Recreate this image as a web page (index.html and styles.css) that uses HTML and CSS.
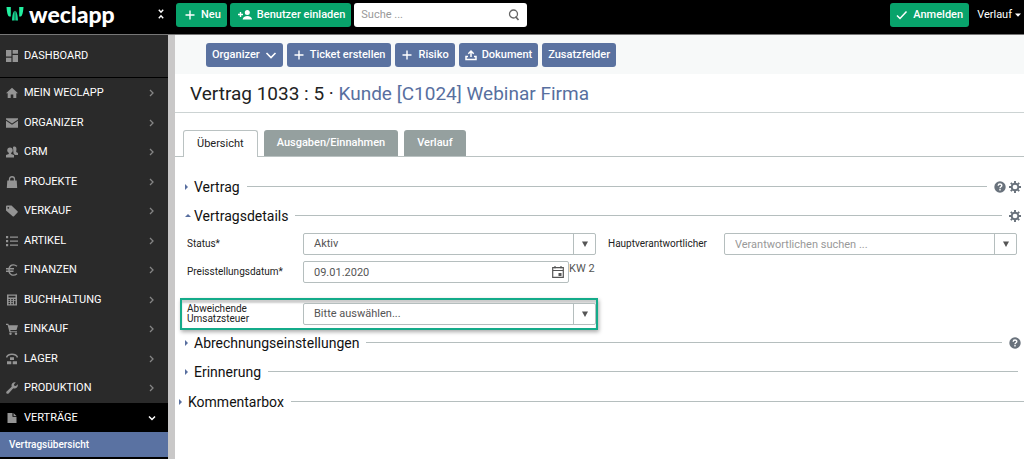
FILE: index.html
```html
<!DOCTYPE html>
<html lang="de">
<head>
<meta charset="utf-8">
<meta name="viewport" content="width=device-width, initial-scale=1">
<title>weclapp – Vertrag 1033</title>
<link rel="stylesheet" href="styles.css">
</head>
<body>
<svg class="sprite" aria-hidden="true">
  <symbol id="chevron" viewBox="0 0 8 10"><path d="M2 2l3 3L2 8" fill="none" stroke="currentColor" stroke-width="1.300"/></symbol>
  <symbol id="plus" viewBox="0 0 12 12"><path d="M6 1.500v9M1.500 6h9" fill="none" stroke="currentColor" stroke-width="1.400"/></symbol>
  <symbol id="gear" viewBox="0 0 12 12"><circle cx="6" cy="6" r="3.300" fill="none" stroke="currentColor" stroke-width="1.900"/><path d="M6 0v2.200M6 9.800V12M0 6h2.200M9.800 6H12M1.800 1.800l1.500 1.500M8.700 8.700l1.500 1.500M1.800 10.200l1.500-1.500M8.700 3.300l1.500-1.500" stroke="currentColor" stroke-width="1.900"/></symbol>
  <symbol id="help" viewBox="0 0 12 12"><circle cx="6" cy="6" r="5.700" fill="currentColor"/><path d="M4.200 4.700C4.200 2.500 7.800 2.500 7.800 4.600C7.800 5.800 6 5.700 6 7.200M6 8.100v1.400" fill="none" stroke="#fff" stroke-width="1.400"/></symbol>
  <symbol id="down" viewBox="0 0 6 6"><path d="M0 .5h6L3 6z" fill="currentColor"/></symbol>
</svg>

<header class="topbar">
  <div class="brand">
    <a class="logo" href="#">
      <svg class="logo-mark" viewBox="0 0 18 16" aria-hidden="true"><path d="M.5 1h4.300v9.500H3.300C1.800 10.500.8 6 .5 1zM17.500 1h-4.300v9.500h1.500c1.500 0 2.500-4.500 2.800-9.500z" fill="#22f0a0"/><path d="M8.700 4.800V14.500H6c.1-5 1.200-9 2.700-9.700zM9.300 4.800V14.500H12c-.1-5-1.200-9-2.700-9.700z" fill="#18d893"/></svg>
      <span>weclapp</span>
    </a>
    <button class="collapse" type="button" aria-label="Menü einklappen"><svg viewBox="0 0 6 10"><path d="M.8.800L3 3.200 5.200.8M.8 9.200L3 6.800l2.200 2.400" fill="none" stroke="currentColor" stroke-width="1.400"/></svg></button>
  </div>
  <div class="top-actions">
    <button class="btn green" type="button"><svg class="i12"><use href="#plus"/></svg>Neu</button>
    <button class="btn green" type="button"><svg class="i14" viewBox="0 0 14 12"><path d="M2.500 3v5M0 5.500h5" stroke="currentColor" stroke-width="1.400"/><circle cx="9.300" cy="3.500" r="2.500" fill="currentColor"/><path d="M4.700 10.500c0-4.800 9.300-4.800 9.300 0z" fill="currentColor"/></svg>Benutzer einladen</button>
    <div class="search">
      <input type="search" placeholder="Suche ..." aria-label="Suche">
      <svg class="i12" viewBox="0 0 12 12"><circle cx="5.500" cy="5" r="4" fill="none" stroke="currentColor" stroke-width="1.300"/><path d="M7.500 7.500l3 3.500" stroke="currentColor" stroke-width="1.700"/></svg>
    </div>
  </div>
  <div class="session">
    <button class="btn green" type="button"><svg class="i12" viewBox="0 0 12 12"><path d="M1 6.500l3 3 6.500-7" fill="none" stroke="currentColor" stroke-width="1.500"/></svg>Anmelden</button>
    <button class="history" type="button">Verlauf<svg viewBox="0 0 6 4"><path d="M0 .5h6L3 3.700z" fill="currentColor"/></svg></button>
  </div>
</header>

<div class="shell">
  <nav class="sidebar" aria-label="Hauptmenü">
    <a class="dash" href="#"><svg class="i12" viewBox="0 0 12 12"><path d="M0 0h5.400v6.500H0zM6.600 0H12v3.800H6.600zM0 7.700h5.400V12H0zM6.600 5h5.400v7H6.600z" fill="currentColor"/></svg><span>DASHBOARD</span></a>
    <ul class="menu">
      <li><a href="#"><svg class="i12" viewBox="0 0 12 12"><path d="M6 .8l6 5.400h-1.700V11H7.300V7.500H4.700V11h-3V6.200H0z" fill="currentColor"/></svg><span>MEIN WECLAPP</span><svg class="arrow"><use href="#chevron"/></svg></a></li>
      <li><a href="#"><svg class="i12" viewBox="0 0 12 12"><path d="M0 1.200h12v1.300L6 6.400 0 2.500z" fill="currentColor"/><path d="M0 3.800l6 4 6-4v7H0z" fill="currentColor"/></svg><span>ORGANIZER</span><svg class="arrow"><use href="#chevron"/></svg></a></li>
      <li><a href="#"><svg class="i12" viewBox="0 0 12 12"><circle cx="4" cy="4.200" r="2.700" fill="currentColor"/><path d="M2.800 6h2.400v2L8 9v2.500H0V9l2.800-1zM7 1c3-1.500 4 1 3.200 4v1L12 7v2H9L7.500 7.500z" fill="currentColor"/></svg><span>CRM</span><svg class="arrow"><use href="#chevron"/></svg></a></li>
      <li><a href="#"><svg class="i12" viewBox="0 0 12 12"><path d="M1.300 4.500h9.400L11.200 12H.8z" fill="currentColor"/><path d="M3.500 5V3c0-3 5-3 5 0v2" fill="none" stroke="currentColor" stroke-width="1.300"/></svg><span>PROJEKTE</span><svg class="arrow"><use href="#chevron"/></svg></a></li>
      <li><a href="#"><svg class="i12" viewBox="0 0 12 12"><path d="M0 1.500Q0 .5 1 .5h4.500l6 5.800q.6.700 0 1.300L8 11.300q-.7.600-1.400 0L0 5.500zM2.300 1.900a.9.900 0 100 1.800.9.900 0 000-1.800z" fill="currentColor" fill-rule="evenodd"/></svg><span>VERKAUF</span><svg class="arrow"><use href="#chevron"/></svg></a></li>
      <li><a href="#"><svg class="i12" viewBox="0 0 12 12"><path d="M0 1h2.200v2.200H0zM0 5h2.200v2.200H0zM0 9h2.200v2.200H0zM4 1.500h8v1.200H4zM4 5.500h8v1.200H4zM4 9.500h8v1.200H4z" fill="currentColor"/></svg><span>ARTIKEL</span><svg class="arrow"><use href="#chevron"/></svg></a></li>
      <li><a href="#"><svg class="i12" viewBox="0 0 12 12"><path d="M11 2.200C7.500-.5 3 1 3 6s4.500 6.500 8 3.800M0 4.800h8M0 7.200h7.500" fill="none" stroke="currentColor" stroke-width="1.400"/></svg><span>FINANZEN</span><svg class="arrow"><use href="#chevron"/></svg></a></li>
      <li><a href="#"><svg class="i12" viewBox="0 0 12 12"><path d="M1 .5h10v11H1zM2.500 1.800v1.700h7V1.800zM2.500 5v1.200H4V5zM5.300 5v1.200h1.500V5zM8 5v1.200h1.500V5zM2.500 7v1.200H4V7zM5.300 7v1.200h1.500V7zM2.500 9v1.200H4V9zM5.300 9v1.200h1.500V9zM8 7v3.200h1.500V7z" fill="currentColor" fill-rule="evenodd"/></svg><span>BUCHHALTUNG</span><svg class="arrow"><use href="#chevron"/></svg></a></li>
      <li><a href="#"><svg class="i12" viewBox="0 0 12 12"><path d="M0 .8h2.300l.5 1.400H12L10.500 7H4.300l.3 1.200H11v1H3.500L1.600 2H0z" fill="currentColor"/><circle cx="4.500" cy="10.700" r="1.200" fill="currentColor"/><circle cx="10" cy="10.700" r="1.200" fill="currentColor"/></svg><span>EINKAUF</span><svg class="arrow"><use href="#chevron"/></svg></a></li>
      <li><a href="#"><svg class="i12" viewBox="0 0 12 12"><path d="M.5 4.500C2 .2 10 .2 11.500 4.500" fill="none" stroke="currentColor" stroke-width="1.500"/><path d="M4 4.200h4V7H4zM1 8.300h4.300v3H1zM6.700 8.300H11v3H6.700z" fill="currentColor"/></svg><span>LAGER</span><svg class="arrow"><use href="#chevron"/></svg></a></li>
      <li><a href="#"><svg class="i12" viewBox="0 0 12 12"><path d="M9.700.4L8 2.200l.3 1.600 1.600.3L11.700 2.300C12.500 5 10 7.200 7.300 6.300L2.600 11.400C1.200 12.600-.6 10.800.6 9.400L5.700 4.700C4.800 2 7 -.4 9.700.4z" fill="currentColor"/></svg><span>PRODUKTION</span><svg class="arrow"><use href="#chevron"/></svg></a></li>
    </ul>
    <a class="current" href="#" aria-expanded="true"><svg class="i12" viewBox="0 0 12 12"><path d="M1.500 1h5v3.800h4V11h-9zM7.500 1l3 2.900h-3z" fill="currentColor"/></svg><span>VERTRÄGE</span><svg class="open" viewBox="0 0 8 6"><path d="M1 1.500l3 3 3-3" fill="none" stroke="currentColor" stroke-width="1.500"/></svg></a>
    <a class="sub" href="#" aria-current="page">Vertragsübersicht</a>
  </nav>

  <main class="content">
    <div class="toolbar">
      <button class="btn blue" type="button">Organizer<svg class="i12" viewBox="0 0 12 12"><path d="M1.500 4L6 8.500 10.500 4" fill="none" stroke="currentColor" stroke-width="1.600"/></svg></button>
      <button class="btn blue" type="button"><svg class="i12"><use href="#plus"/></svg>Ticket erstellen</button>
      <button class="btn blue" type="button"><svg class="i12"><use href="#plus"/></svg>Risiko</button>
      <button class="btn blue" type="button"><svg class="i12" viewBox="0 0 12 12"><path d="M6 8V2.500M3.300 4.800L6 2l2.700 2.800M3 7.500H1v3h10v-3H9" fill="none" stroke="currentColor" stroke-width="1.500"/></svg>Dokument</button>
      <button class="btn blue" type="button">Zusatzfelder</button>
    </div>
    <h1 class="title">Vertrag 1033 : 5 · <a href="#">Kunde [C1024] Webinar Firma</a></h1>

    <div class="tabs" role="tablist">
      <button class="tab active" type="button" role="tab" aria-selected="true">Übersicht</button>
      <button class="tab" type="button" role="tab" aria-selected="false">Ausgaben/Einnahmen</button>
      <button class="tab" type="button" role="tab" aria-selected="false">Verlauf</button>
    </div>

    <div class="panel">
      <section class="head"><h2><button type="button" aria-expanded="false">Vertrag</button></h2><span class="rule"></span><button class="tool" type="button" aria-label="Hilfe"><svg class="i12"><use href="#help"/></svg></button><button class="tool" type="button" aria-label="Einstellungen"><svg class="i12"><use href="#gear"/></svg></button></section>
      <section class="head"><h2><button type="button" aria-expanded="true">Vertragsdetails</button></h2><span class="rule"></span><button class="tool" type="button" aria-label="Einstellungen"><svg class="i12"><use href="#gear"/></svg></button></section>

      <form class="form">
        <div class="row">
          <label for="status">Status*</label>
          <div class="combo"><select id="status"><option>Aktiv</option></select><span class="drop"><svg><use href="#down"/></svg></span></div>
        </div>
        <div class="row">
          <label for="owner">Hauptverantwortlicher</label>
          <div class="combo"><input id="owner" type="text" placeholder="Verantwortlichen suchen ..."><button class="drop" type="button" aria-label="Liste öffnen"><svg><use href="#down"/></svg></button></div>
        </div>
        <div class="row first">
          <label for="date">Preisstellungsdatum*</label>
          <div class="date">
            <div class="combo"><input id="date" type="text" value="09.01.2020"><button class="cal" type="button" aria-label="Kalender"><svg class="i12" viewBox="0 0 12 12"><path d="M.7 1.700h10.600v9.600H.7zM.7 4.500h10.600M3 0v2.500M9 0v2.500" fill="none" stroke="currentColor" stroke-width="1.200"/><path d="M6.500 7h3v3h-3z" fill="currentColor"/></svg></button></div>
            <span class="week">KW 2</span>
          </div>
        </div>
        <div class="row first marked">
          <label for="tax">Abweichende Umsatzsteuer</label>
          <div class="combo"><select id="tax"><option>Bitte auswählen...</option></select><span class="drop"><svg><use href="#down"/></svg></span></div>
        </div>
      </form>

      <section class="head"><h2><button type="button" aria-expanded="false">Abrechnungseinstellungen</button></h2><span class="rule"></span><button class="tool" type="button" aria-label="Hilfe"><svg class="i12"><use href="#help"/></svg></button></section>
      <section class="head"><h2><button type="button" aria-expanded="false">Erinnerung</button></h2><span class="rule"></span></section>
    </div>
    <section class="head comments"><h2><button type="button" aria-expanded="false">Kommentarbox</button></h2><span class="rule"></span></section>
  </main>
</div>
</body>
</html>
```
FILE: styles.css
```css
*, *::before { box-sizing: border-box; }
body {
  margin: 0;
  min-height: 100vh;
  display: flex;
  flex-direction: column;
  background: #fff;
  color: #222;
  font: 11px/16px Roboto, "Liberation Sans", sans-serif;
}
button, input, select { font: inherit; color: inherit; margin: 0; }
button { border: 0; padding: 0; background: none; cursor: pointer; }
a { color: inherit; text-decoration: none; }
svg { display: block; flex: none; }
.sprite { position: absolute; width: 0; height: 0; }
.i12 { width: 12px; height: 12px; }
.i14 { width: 14px; height: 12px; }

/* top bar */
.topbar { display: flex; align-items: flex-start; height: 35px; background: #000; color: #fff; border-bottom: 1px solid #777; }
.brand { width: 176px; display: flex; align-items: center; justify-content: space-between; padding: 0 12px 0 6px; height: 28px; }
.logo { display: flex; align-items: center; gap: 5px; font-family: Lato, sans-serif; font-size: 23px; line-height: 28px; font-weight: 900; }
.logo-mark { width: 18px; height: 16px; }
.collapse svg { width: 6px; height: 10px; }
.top-actions { display: flex; gap: 3px; padding-top: 3px; }
.btn { display: flex; align-items: center; justify-content: center; gap: 5px; height: 24px; padding: 0 6px; border-radius: 3px; color: #fff; font-weight: 500; white-space: nowrap; }
.green { background: #08a36b; }
.top-actions .btn { padding: 0 6px 0 8px; }
.search { display: flex; align-items: center; width: 173px; height: 24px; padding: 0 7px; border-radius: 3px; background: #fff; color: #666; }
.search input { flex: 1; min-width: 0; border: 0; padding: 0; outline: 0; background: none; }
.search input::placeholder { color: #999; }
.session { margin-left: auto; display: flex; gap: 8px; padding: 3px 3px 0 0; }
.history { display: flex; align-items: center; gap: 3px; height: 24px; color: #fff; }
.history svg { width: 6px; height: 4px; }

/* sidebar */
.shell { flex: 1; display: flex; }
.sidebar { flex: none; width: 175px; border-right: 7px solid #c9c8c8; background: #000; color: #fff; }
.dash, .menu a, .current { display: flex; align-items: center; gap: 6px; padding: 0 12px 0 6px; }
.dash { height: 42px; background: #2a2a2a; }
.dash svg, .menu svg, .current .i12 { color: #949494; }
.menu { list-style: none; margin: 1px 0 0; padding: 0; background: #2a2a2a; }
.menu a { height: 29px; }
.menu li:nth-child(odd) { padding-bottom: 1px; }
.menu .arrow { width: 8px; height: 10px; margin-left: auto; color: #858585; }
.current { height: 29px; }
.open { width: 8px; height: 6px; margin-left: auto; }
.sub { display: flex; align-items: center; height: 25px; padding-left: 9px; background: #5a72a2; font-size: 10px; font-weight: 500; }

/* content */
.content { flex: 1; min-width: 0; }
.toolbar { display: flex; gap: 4px; padding: 8px 0 7px 31px; background: #f7f9f9; }
.blue { background: #5a72a0; }
.title { margin: 0; padding: 7px 0 6px 15px; border-bottom: 1px solid #ccd3d3; font-size: 19px; line-height: 25px; font-weight: 400; }
.title a { color: #586f9f; }
.tabs { display: flex; align-items: flex-end; gap: 6px; margin-top: 17px; padding-left: 8px; border-bottom: 1px solid #bac2c2; }
.tab { height: 26px; padding: 0 13px; border-radius: 3px 3px 0 0; background: #95a09f; color: #fff; font-weight: 500; }
.tab.active { height: 27px; margin-bottom: -1px; background: #fff; color: #222; border: 1px solid #bac2c2; border-bottom: 0; font-weight: 400; }
.panel { padding: 15px 0 0 10px; }
.head { display: flex; align-items: center; gap: 7px; height: 29px; padding-right: 3px; }
.head h2 { margin: 0; font-size: 14px; line-height: 20px; font-weight: 400; color: #111; }
.head h2 button { display: flex; align-items: center; gap: 3px; }
.head h2 button::before { content: ""; margin: 0 3px 0 0; border: solid transparent; border-width: 3px 0 3px 3px; border-left-color: #586f9f; }
.head h2 button[aria-expanded="true"]::before { margin: 0; border-width: 0 3px 3px; border-color: transparent transparent #586f9f; }
.rule { flex: 1; height: 1px; background: #b5bebe; }
.rule:last-child { margin-right: 3px; }
.tool + .tool { margin-left: -4px; }
.tool { color: #69727c; }
.comments { margin-top: 1px; padding-left: 4px; padding-right: 0; }
.comments .rule { margin-right: 0; }

/* form */
.form { display: grid; grid-template-columns: 1fr 1fr; column-gap: 12px; row-gap: 6px; margin-bottom: -2px; padding: 3px 7px 0 2px; }
.row { display: grid; grid-template-columns: 116px 1fr; align-items: center; }
.row.first { grid-column: 1; }
label { font-size: 10px; line-height: 10px; color: #222; }
.combo { flex: 1; min-width: 0; display: flex; height: 22px; border: 1px solid #b5bebe; border-radius: 2px; background: #fff; color: #555; }
.combo input, .combo select { flex: 1; min-width: 0; height: 20px; padding: 0 10px; border: 0; outline: 0; background: none; appearance: none; }
.combo input::placeholder { color: #999; }
.drop { display: flex; align-items: center; justify-content: center; width: 22px; border-left: 1px solid #b5bebe; }
.drop svg { width: 6px; height: 6px; }
.cal { padding: 0 4px; }
.date { display: flex; align-items: flex-start; }
.week { width: 27px; color: #555; white-space: nowrap; }
.marked { margin: 9px -2px 0 -7px; padding: 3px 0 3px 5px; border: 2px solid #14ab8a; box-shadow: 1px 2px 4px #0005, inset 0 3px 2px #0003; }
.marked label { width: 80px; }
```
